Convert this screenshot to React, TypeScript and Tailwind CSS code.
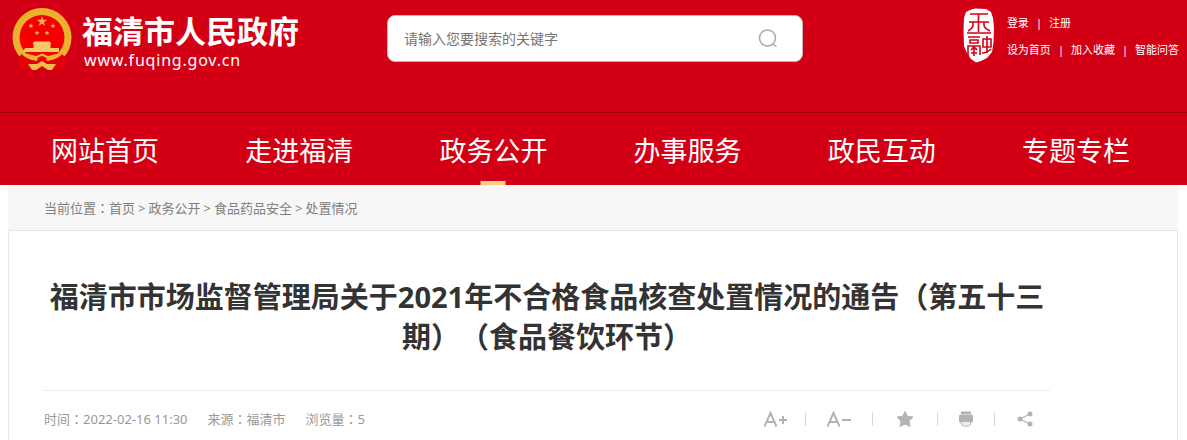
import React from "react";

const navItems = ["网站首页", "走进福清", "政务公开", "办事服务", "政民互动", "专题专栏"];
const activeItem = "政务公开";
const crumbs = ["首页", "政务公开", "食品药品安全", "处置情况"];

const star = (cx: number, cy: number, r: number) =>
  Array.from({ length: 10 }, (_, i) => {
    const radius = i % 2 ? r * 0.4 : r;
    const a = (Math.PI * i) / 5 - Math.PI / 2;
    return `${(cx + radius * Math.cos(a)).toFixed(2)},${(cy + radius * Math.sin(a)).toFixed(2)}`;
  }).join(" ");

function Emblem() {
  return (
    <svg viewBox="0 0 60 64" className="h-16 w-15 shrink-0" role="img" aria-label="国徽">
      <path d="M8 46 L52 46 L52 60 Q44 63 38 61 L22 61 Q16 63 8 60 Z" fill="#e30008" />
      <circle cx="30" cy="29.5" r="29.5" fill="#efb42e" />
      <circle cx="30" cy="29.5" r="26.5" fill="none" stroke="#e2a62a" strokeWidth="1" strokeDasharray="3 2" />
      <circle cx="30" cy="29.5" r="22.5" fill="#f50000" />
      <g fill="#f3a64a">
        <polygon points={star(30, 13.5, 5.5)} />
        <polygon points={star(19, 18, 2.8)} />
        <polygon points={star(41, 18, 2.8)} />
        <polygon points={star(25, 25, 2.8)} />
        <polygon points={star(35, 25, 2.8)} />
        <path d="M22 33.5 H38 L39.500 36 H20.500 Z M21.500 36 H38.500 V40 H21.500 Z M13 40 H47 V44 H11 Z" fill="#f8c866" />
      </g>
      <path d="M11 45 L24 53 L30 50 L36 53 L49 45 L53 49 L52 60 Q44 63 38 59 L22 59 Q16 63 8 60 L7 49 Z" fill="#e30008" />
      <path d="M8 44.500 Q15 52 23 52.500 L27 49.500 L33 49.500 L37 52.500 Q45 52 52 44.500 L44 46 L36 48 L30 45.500 L24 48 L16 46 Z" fill="#efb42e" />
      <path d="M16 56 L25 56 L30 53 L35 56 L44 56 L40 62 H36 L30 58 L24 62 H20 Z" fill="#f3bd49" />
      <path d="M26 51 Q30 46.500 34 51" fill="none" stroke="#e30008" strokeWidth="1.5" />
    </svg>
  );
}

function Seal() {
  return (
    <svg viewBox="0 0 32 56" className="h-14 w-8 shrink-0" role="img" aria-label="玉融">
      <path
        d="M7 2 L12 0.5 L23 1 L28 4 L30 10 L31 20 L30.5 34 L29 44 L24 50 L18 53 L13 54.5 L8 51 L4 45 L1 38 L0.5 22 L1 10 L3 4 Z"
        fill="#fff"
      />
      <g fill="none" stroke="#d30015" strokeWidth="1.6">
        <path d="M7 6 H25 M15.500 6 V24 M6 14 H10 V17 Q10 20 5 23 M26 14 H21 V17 Q21 20 27 23 M10 14 H21 M4 25 H28" />
        <path d="M5 29 H17 M7 32 H15 V35 H7 Z M5 48 V38 H17 V47 M8 42 L11 39 L14 42 M11 41 V48 M8 45 H14" />
        <path d="M20 31 H28 V39 H20 Z M24 28 V45 M19 45 Q24 45 28 41" />
      </g>
    </svg>
  );
}

/** Full-width colon centred in its cell. */
function Colon() {
  return <span className="font-['Noto_Sans_CJK_TC',sans-serif] leading-none">：</span>;
}

function Separator() {
  return <span aria-hidden="true" className="h-3.5 w-px bg-[#d8d8d8]" />;
}

export default function App() {
  return (
    <div className="min-h-screen bg-white font-['Noto_Sans','Noto_Sans_CJK_SC',sans-serif] text-[13px]">
      <header className="bg-[#d30015] text-white">
        <div className="flex h-28 items-start justify-between pr-2 pl-3">
          <a href="#home" className="flex w-[375px] shrink-0 items-start gap-2.5 pt-2">
            <Emblem />
            <span className="flex flex-col pt-1">
              <span className="text-[31px] leading-[38px] font-bold">福清市人民政府</span>
              <span className="pl-0.5 text-base leading-5 tracking-wider">www.fuqing.gov.cn</span>
            </span>
          </a>
          <form role="search" className="mt-[15px] flex h-[47px] w-[416px] items-center rounded-lg border border-[#c9b5b5] bg-white pr-6 pl-4">
            <input
              type="text"
              aria-label="搜索"
              placeholder="请输入您要搜索的关键字"
              className="min-w-0 flex-1 bg-transparent text-sm text-gray-700 outline-none placeholder:text-[#757575]"
            />
            <button type="button" aria-label="搜索" className="text-[#a8a8a8]">
              <svg viewBox="0 0 20 20" className="size-5" fill="none" stroke="currentColor" strokeWidth="1.5">
                <circle cx="9.500" cy="9" r="8" />
                <path d="M15 15 L18.500 17.500" />
              </svg>
            </button>
          </form>
          <div className="ml-auto flex gap-3 pt-2">
            <Seal />
            <div className="flex flex-col gap-[7px] pt-[5px] text-[11px] leading-5">
              <div className="flex gap-[7px]">
                <a href="#login">登录</a>
                <span>|</span>
                <a href="#register">注册</a>
              </div>
              <div className="flex gap-[7px]">
                <a href="#homepage">设为首页</a>
                <span>|</span>
                <a href="#favorite">加入收藏</a>
                <span>|</span>
                <a href="#qa">智能问答</a>
              </div>
            </div>
          </div>
        </div>
        <nav className="border-t border-[#9c000f] pr-3.5 pl-2">
          <ul className="grid grid-cols-6">
            {navItems.map((item) => (
              <li key={item} className="flex justify-center">
                <a href="#nav" className="relative flex h-[72px] items-center pt-1 text-[27px] whitespace-nowrap">
                  {item}
                  {item === activeItem && (
                    <span className="absolute bottom-0 left-1/2 h-1 w-[25px] -translate-x-1/2 bg-[#ffcc80]" />
                  )}
                </a>
              </li>
            ))}
          </ul>
        </nav>
      </header>

      <main className="mr-[9px] ml-2">
        <nav aria-label="当前位置" className="flex h-[45px] items-center bg-[#f7f7f7] pl-9 text-[#808080]">
          <div className="leading-5">
            当前位置<Colon />
            {crumbs.map((crumb, i) => (
              <React.Fragment key={crumb}>
                {i > 0 && <span className="px-[3px]">&gt;</span>}
                <a href="#crumb">{crumb}</a>
              </React.Fragment>
            ))}
          </div>
        </nav>

        <article className="min-h-[210px] border border-b-0 border-[#e6e6e6] pt-[46px] pr-[127px] pl-[35px]">
          <h1 className="text-center text-[29px] leading-10 font-bold text-[#333] [text-spacing-trim:space-all]">
            福清市市场监督管理局关于2021年不合格食品核查处置情况的通告（第五十三期）（食品餐饮环节）
          </h1>
          <div className="mt-[33px] flex h-14 items-center justify-between border-t border-[#ececec] text-[#999]">
            <div className="flex gap-5 leading-5">
              <span>时间<Colon />2022-02-16 11:30</span>
              <span>来源<Colon />福清市</span>
              <span>浏览量<Colon />5</span>
            </div>
            <div className="flex items-center pr-[17px] text-[#b3b3b3]">
              <button type="button" aria-label="放大字号" className="mr-4">
                <svg viewBox="0 0 26 20" className="h-5 w-[26px]" fill="none" stroke="currentColor" strokeWidth="2">
                  <path d="M1.500 17.500 L7.500 4 L13.500 17.500 M3.500 13 H11.500 M16 11 H24 M20 7 V15" />
                </svg>
              </button>
              <Separator />
              <button type="button" aria-label="缩小字号" className="mx-5">
                <svg viewBox="0 0 26 20" className="h-5 w-[26px]" fill="none" stroke="currentColor" strokeWidth="2">
                  <path d="M1.500 17.500 L7.500 4 L13.500 17.500 M3.500 13 H11.500 M16 11 H25" />
                </svg>
              </button>
              <Separator />
              <button type="button" aria-label="收藏" className="mx-[22px]">
                <svg viewBox="0 0 20 20" className="size-5" fill="currentColor">
                  <path d="M10 2.500 L12.300 7.300 L18 8 L14 12 L15 17.500 L10 15 L5 17.500 L6 12 L2 8 L7.700 7.300 Z" stroke="currentColor" strokeLinejoin="round" />
                </svg>
              </button>
              <Separator />
              <button type="button" aria-label="打印" className="mx-5">
                <svg viewBox="0 0 16 16" className="size-4" fill="currentColor">
                  <path d="M3 0.500 H13 V3 H3 Z" />
                  <path d="M2.500 3.500 H13.500 Q15 3.500 15 5 V10 Q15 11.500 13.500 11.500 H2.500 Q1 11.500 1 10 V5 Q1 3.500 2.500 3.500 Z" />
                  <path d="M3 10.500 H13 L12.500 13 Q12 15 10.500 15 H5.500 Q4 15 3.500 13 Z" fill="#eee" stroke="currentColor" />
                </svg>
              </button>
              <Separator />
              <button type="button" aria-label="分享" className="ml-[22px]">
                <svg viewBox="0 0 16 16" className="size-4" fill="currentColor">
                  <path d="M13 3 L3 8 L13 13" fill="none" stroke="currentColor" strokeWidth="1.3" />
                  <circle cx="13" cy="3" r="2.500" />
                  <circle cx="3" cy="8" r="2.500" />
                  <circle cx="13" cy="13" r="2.500" />
                </svg>
              </button>
            </div>
          </div>
        </article>
      </main>
    </div>
  );
}
